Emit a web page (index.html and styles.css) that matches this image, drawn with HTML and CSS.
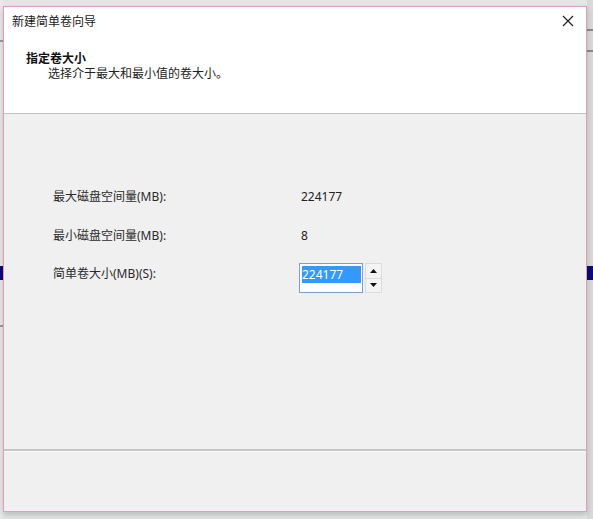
FILE: index.html
```html
<!DOCTYPE html>
<html lang="zh-CN">
<head>
<meta charset="utf-8">
<title>新建简单卷向导</title>
<link rel="stylesheet" href="styles.css">
</head>
<body>
<div class="desktop">
  <div class="bg-line bg-line-r1"></div>
  <div class="bg-line bg-line-r2"></div>
  <div class="bg-line bg-line-l1"></div>
  <div class="bg-line bg-line-l2"></div>
  <div class="bg-sel"></div>
  <div class="dialog">
    <div class="header">
      <div class="titlebar">
        <span class="title">新建简单卷向导</span>
        <span class="close" aria-label="关闭">
          <svg width="12" height="12" viewBox="0 0 12 12"><path d="M1 1L11 11M11 1L1 11" stroke="#222" stroke-width="1.2" fill="none"/></svg>
        </span>
      </div>
      <div class="heading">指定卷大小</div>
      <div class="subheading">选择介于最大和最小值的卷大小。</div>
    </div>
    <div class="content">
      <div class="row">
        <span class="label">最大磁盘空间量(MB):</span>
        <span class="value">224177</span>
      </div>
      <div class="row row2">
        <span class="label">最小磁盘空间量(MB):</span>
        <span class="value">8</span>
      </div>
      <div class="row row3">
        <span class="label label3">简单卷大小(MB)(S):</span>
        <div class="spin">
          <div class="input"><span class="selected">224177</span></div>
          <div class="spin-buttons">
            <div class="spin-btn"><svg width="7" height="4" viewBox="0 0 7 4"><path d="M0 4L3.5 0L7 4Z" fill="#111"/></svg></div>
            <div class="spin-btn"><svg width="7" height="4" viewBox="0 0 7 4"><path d="M0 0L3.5 4L7 0Z" fill="#111"/></svg></div>
          </div>
        </div>
      </div>
    </div>
    <div class="footer"></div>
  </div>
</div>
</body>
</html>
```
FILE: styles.css
```css
html, body {
  margin: 0;
  padding: 0;
}
body {
  width: 593px;
  height: 519px;
  overflow: hidden;
  background: #e4e6e6;
  font-family: "Noto Sans", "Noto Sans CJK SC", sans-serif;
  font-size: 12px;
  color: #222;
}
.desktop {
  position: relative;
  width: 593px;
  height: 519px;
  background: linear-gradient(to right, #e9e9e9 0, #e9e9e9 3px, transparent 3px, transparent 587px, #d9d9d9 587px);
}
.bg-line {
  position: absolute;
  height: 2px;
  background: #8a8a8a;
}
.bg-line-r1 { left: 587px; width: 6px; top: 29px; }
.bg-line-r2 { left: 587px; width: 6px; top: 50px; }
.bg-line-l1 { left: 0; width: 3px; top: 40px; background: #9a9a9a; }
.bg-line-l2 { left: 0; width: 3px; top: 325px; background: #9a9a9a; }
.bg-sel {
  position: absolute;
  left: 0;
  width: 593px;
  top: 266px;
  height: 14px;
  background: #0b0b7a;
}
.dialog {
  position: absolute;
  left: 3px;
  top: 6px;
  width: 582px;
  height: 504px;
  border: 1px solid #e59ac0;
  background: #f0f0f0;
  display: flex;
  flex-direction: column;
  box-shadow: 0 3px 6px rgba(0,0,0,0.18);
}
.header {
  background: #fff;
  height: 107px;
  border-bottom: 1px solid #c2c2c2;
  padding: 6px 0 0 0;
  box-sizing: border-box;
  flex: none;
}
.titlebar {
  display: flex;
  justify-content: space-between;
  align-items: center;
  height: 16px;
  line-height: 16px;
  padding: 0 10px 0 8px;
}
.title {
  font-family: "Noto Sans CJK SC", sans-serif;
  font-size: 12px;
  color: #1a1a1a;
}
.close {
  display: flex;
  width: 12px;
  height: 12px;
  margin-right: 2px;
}
.heading {
  margin: 21px 0 0 22px;
  font-family: "Noto Sans CJK SC", sans-serif;
  font-weight: bold;
  font-size: 12px;
  line-height: 15px;
  color: #111;
}
.subheading {
  margin: 0 0 0 44px;
  font-family: "Noto Sans CJK SC", sans-serif;
  font-size: 12px;
  line-height: 15px;
  color: #222;
}
.content {
  flex: none;
  height: 337px;
  padding: 75px 0 0 49px;
  box-sizing: border-box;
  border-bottom: 2px solid #c6c6c6;
}
.row {
  display: flex;
  align-items: flex-start;
  line-height: 16px;
  height: 16px;
}
.row2 { margin-top: 23px; }
.row3 { margin-top: 19px; height: 30px; }
.label {
  width: 246px;
  flex: none;
  color: #2a2a2a;
}
.label3 { padding-top: 3px; }
.value {
  padding-left: 2px;
  color: #222;
}
.spin {
  display: flex;
  gap: 2px;
}
.input {
  width: 62px;
  height: 28px;
  border: 1px solid #7f9fcf;
  background: #fff;
  box-sizing: content-box;
  padding: 0;
}
.selected {
  display: inline-block;
  margin: 2px 0 0 2px;
  width: 59px;
  height: 17px;
  line-height: 17px;
  background: #3399ff;
  color: #fff;
}
.spin-buttons {
  display: flex;
  flex-direction: column;
  width: 17px;
  height: 30px;
  background: #dcdcdc;
  box-sizing: border-box;
  padding: 1px;
  gap: 1px;
}
.spin-btn {
  flex: 1;
  background: #f3f3f3;
  display: flex;
  align-items: center;
  justify-content: center;
}
.footer {
  flex: 1;
  background: #f0f0f0;
  border-top: 1px solid #fafafa;
}
```
